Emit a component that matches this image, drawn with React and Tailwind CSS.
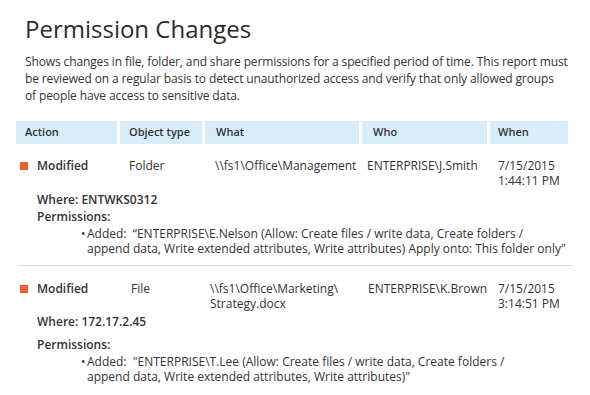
import React from "react";

const rows = [
  {
    type: "Folder",
    typePad: "pl-[9px]",
    what: ["\\\\fs1\\Office\\Management"],
    whatPad: "pl-[10px]",
    who: "ENTERPRISE\\J.Smith",
    whoPad: "pl-[5px]",
    when: ["7/15/2015", "1:44:11 PM"],
    where: "ENTWKS0312",
    added: [
      "\u201CENTERPRISE\\E.Nelson (Allow: Create files / write data, Create folders /",
      "append data, Write extended attributes, Write attributes) Apply onto: This folder only\"",
    ],
    top: "pt-[14px]",
    whereGap: "mt-[3px]",
    permGap: "mt-0",
  },
  {
    type: "File",
    typePad: "pl-[11px]",
    what: ["\\\\fs1\\Office\\Marketing\\", "Strategy.docx"],
    whatPad: "pl-[5px]",
    who: "ENTERPRISE\\K.Brown",
    whoPad: "pl-[6px]",
    when: ["7/15/2015", "3:14:51 PM"],
    where: "172.17.2.45",
    added: [
      "\"ENTERPRISE\\T.Lee (Allow: Create files / write data, Create folders /",
      "append data, Write extended attributes, Write attributes)\"",
    ],
    top: "pt-[15px]",
    whereGap: "mt-[2px]",
    permGap: "mt-[6px]",
  },
];

const cols = "grid grid-cols-[101px_82px_154px_125px_78px] gap-x-[3px]";

const App = () => {
  return (
    <div
      className="w-[590px] h-[395px] bg-white text-[#333333] px-4 overflow-hidden"
      style={{ fontFamily: "'Open Sans', 'Liberation Sans', sans-serif" }}
    >
      <h1 className="pl-[9px] pt-[15px] text-[24px] leading-[28px] font-normal text-[#2b2b2b]">
        Permission Changes
      </h1>
      <p className="pl-[9px] mt-[10px] text-[12px] leading-[17px] tracking-[-0.12px] whitespace-nowrap">
        Shows changes in file, folder, and share permissions for a specified period of time. This report must
        <br />
        be reviewed on a regular basis to detect unauthorized access and verify that only allowed groups
        <br />
        of people have access to sensitive data.
      </p>

      <div className={`${cols} mt-[17px] text-[11px] font-semibold`}>
        <div className="bg-[#d8edf9] h-[23px] flex items-center pl-[9px]">Action</div>
        <div className="bg-[#d8edf9] h-[23px] flex items-center pl-[9px]">Object type</div>
        <div className="bg-[#d8edf9] h-[23px] flex items-center pl-[11px]">What</div>
        <div className="bg-[#d8edf9] h-[23px] flex items-center pl-[11px]">Who</div>
        <div className="bg-[#d8edf9] h-[23px] flex items-center pl-[8px]">When</div>
      </div>

      {rows.map((row, index) => (
        <div
          key={index}
          className={`${row.top} mx-[2px] ${index === 0 ? "pb-[9px] border-b border-[#dcdcdc]" : ""}`}
        >
          <div className={`${cols} -mx-[2px] text-[12px] leading-[15px]`}>
            <div className="flex items-center gap-[9px] pl-[4px] h-[15px]">
              <span className="w-[8px] h-[8px] bg-[#ef5f2f]" />
              <span className="font-semibold">Modified</span>
            </div>
            <div className={row.typePad}>{row.type}</div>
            <div className={row.whatPad}>
              {row.what.map((line) => (
                <div key={line}>{line}</div>
              ))}
            </div>
            <div className={row.whoPad}>{row.who}</div>
            <div className="pl-[8px]">
              {row.when.map((line) => (
                <div key={line}>{line}</div>
              ))}
            </div>
          </div>

          <div className="pl-[19px] text-[12px]">
            <p className={`${row.whereGap} leading-[17px] font-semibold`}>Where: {row.where}</p>
            <p className={`${row.permGap} leading-[17px] font-semibold`}>Permissions:</p>
            <div className="flex mt-px pl-[44px] leading-[15px] whitespace-nowrap">
              <span className="w-[6px]">•</span>
              <div>
                <div>Added:&nbsp;&nbsp;{row.added[0]}</div>
                <div>{row.added[1]}</div>
              </div>
            </div>
          </div>
        </div>
      ))}
    </div>
  );
};

export default App;
